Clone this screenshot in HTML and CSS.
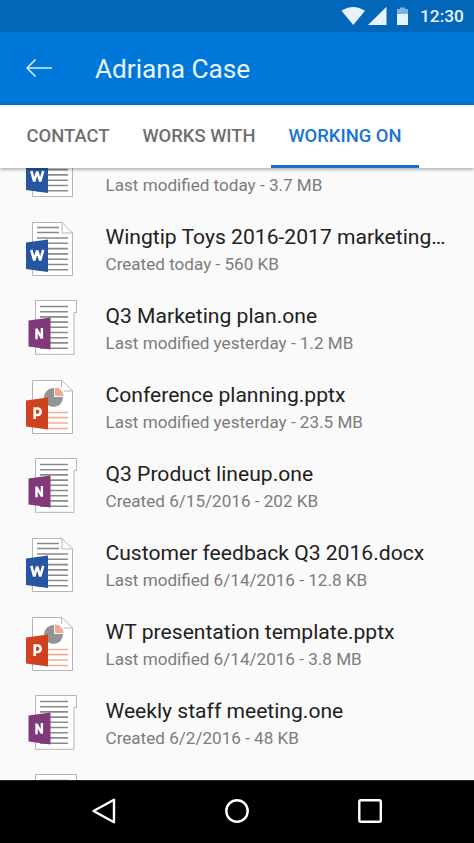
FILE: index.html
```html
<!DOCTYPE html>
<html lang="en">
<head>
<meta charset="utf-8">
<title>Adriana Case</title>
<link rel="stylesheet" href="styles.css">
</head>
<body>
<svg class="defs" width="0" height="0" aria-hidden="true">
  <symbol id="word" viewBox="0 0 54 56">
    <path d="M7.500 1.500H37L47.500 12V54.500H7.500Z" fill="#fff" stroke="#b5b5b5"/>
    <path d="M37 1.500V12H47.500" fill="none" stroke="#b5b5b5"/>
    <path d="M12 6.500H34M12 11.500H34M12 17H43M12 22.300H43M12 27.600H43M12 32.900H43M12 38.200H43M12 43.500H43M12 48.800H43" stroke="#8a8a8a" stroke-width="1.600"/>
    <path d="M1 21.500L23 18.500V51L1 48Z" fill="#2755a0"/>
    <path d="M6.300 28.800L9.200 39.500L12.200 29.500L15.200 39.500L18.200 28.800" fill="none" stroke="#fff" stroke-width="2.600" stroke-linejoin="bevel"/>
  </symbol>
  <symbol id="note" viewBox="0 0 54 56">
    <path d="M10.500 .500H51.500V12.500H49V54.300H10.500Z" fill="#fff" stroke="#b5b5b5"/>
    <path d="M15 6.500H43M15 11.700H43M15 16.900H43M15 22.100H43M15 27.300H43M15 32.500H43M15 37.700H43M15 42.900H43M15 48.200H43" stroke="#8a8a8a" stroke-width="1.600"/>
    <path d="M3.500 20.500L25.500 17.500V49.500L3.500 46.500Z" fill="#80397b"/>
    <path d="M11.500 39.200V28.500M16.900 38.800V28M11.500 29L16.900 38.500" fill="none" stroke="#fff" stroke-width="2.400"/>
  </symbol>
  <symbol id="deck" viewBox="0 0 54 56">
    <path d="M7.500 1.500H37L47.500 12V54.500H7.500Z" fill="#fff" stroke="#b5b5b5"/>
    <path d="M36.500 1.500V12H47.500" fill="none" stroke="#b5b5b5"/>
    <circle cx="28.500" cy="18.500" r="9.500" fill="#949494"/>
    <path d="M29 18V8H39V18Z" fill="#fff"/>
    <path d="M30 17V8.500A8.500 8.500 0 0 1 38.500 17Z" fill="#f5a88c"/>
    <path d="M22 33.500H43M22 38.700H43M22 44H43M22 49.500H43" stroke="#f2ad96" stroke-width="1.700"/>
    <path d="M1 21.500L23 18.500V50.500L1 47.500Z" fill="#d0421f"/>
    <path d="M9.700 40V29.500H12.500A3.200 3.200 0 0 1 12.500 36H9.700" fill="none" stroke="#fff" stroke-width="2.600"/>
  </symbol>
</svg>
<div class="screen">
  <div class="status">
    <svg class="signals" width="68" height="20" viewBox="0 0 68 20">
      <path d="M.500 4.800Q12 -3 24 4.800L12.300 19Z" fill="#e8f2fb"/>
      <path d="M45.500 .800V19H27Z" fill="#e8f2fb"/>
      <path d="M56 3H59V1.500H64V3H67V8H56Z" fill="#7fb2e0"/>
      <path d="M56 8H67V19H56Z" fill="#e8f2fb"/>
    </svg>
    <span class="clock">12:30</span>
  </div>
  <header class="appbar">
    <svg width="28" height="20" viewBox="0 0 28 20" fill="none" stroke="#d9ecfc" stroke-width="1.500"><path d="M27 10H2M10.500 1.500L2 10L10.500 18.500"/></svg>
    <h1>Adriana Case</h1>
  </header>
  <nav class="tabs">
    <a class="tab contact">CONTACT</a>
    <a class="tab works">WORKS WITH</a>
    <a class="tab active">WORKING ON</a>
  </nav>
  <main class="list">
    <div class="row"><svg class="icon"><use href="#word"/></svg><div class="info"><p class="name">Q3 report marketing.docx</p><p class="meta">Last modified today - 3.7 MB</p></div></div>
    <div class="row"><svg class="icon"><use href="#word"/></svg><div class="info"><p class="name">Wingtip Toys 2016-2017 marketing…</p><p class="meta">Created today - 560 KB</p></div></div>
    <div class="row"><svg class="icon"><use href="#note"/></svg><div class="info"><p class="name">Q3 Marketing plan.one</p><p class="meta">Last modified yesterday - 1.2 MB</p></div></div>
    <div class="row"><svg class="icon"><use href="#deck"/></svg><div class="info"><p class="name">Conference planning.pptx</p><p class="meta">Last modified yesterday - 23.5 MB</p></div></div>
    <div class="row"><svg class="icon"><use href="#note"/></svg><div class="info"><p class="name">Q3 Product lineup.one</p><p class="meta">Created 6/15/2016 - 202 KB</p></div></div>
    <div class="row"><svg class="icon"><use href="#word"/></svg><div class="info"><p class="name">Customer feedback Q3 2016.docx</p><p class="meta">Last modified 6/14/2016 - 12.8 KB</p></div></div>
    <div class="row"><svg class="icon"><use href="#deck"/></svg><div class="info"><p class="name">WT presentation template.pptx</p><p class="meta">Last modified 6/14/2016 - 3.8 MB</p></div></div>
    <div class="row"><svg class="icon"><use href="#note"/></svg><div class="info"><p class="name">Weekly staff meeting.one</p><p class="meta">Created 6/2/2016 - 48 KB</p></div></div>
    <div class="row"><svg class="icon"><use href="#note"/></svg></div>
  </main>
  <footer class="navbar">
    <svg width="26" height="28" viewBox="0 0 26 28"><path d="M2.500 14L23 2.800V25.200Z"/></svg>
    <svg width="26" height="28" viewBox="0 0 26 28"><circle cx="13" cy="14" r="10.700"/></svg>
    <svg width="26" height="28" viewBox="0 0 26 28"><rect x="2.300" y="3.300" width="21.500" height="21.500" rx="1.500"/></svg>
  </footer>
</div>
</body>
</html>
```
FILE: styles.css
```css
* { box-sizing: border-box; margin: 0; }
body { font-family: Roboto, "Liberation Sans", sans-serif; }
.defs { display: block; }
.screen { width: 474px; height: 843px; display: flex; flex-direction: column; overflow: hidden; background: #fafafa; }
.status { height: 32px; flex: none; display: flex; justify-content: flex-end; align-items: center; padding-right: 10px; background: #0266b9; color: #e8f2fb; }
.signals { margin-right: 11px; }
.clock { font-size: 17.3px; font-weight: 500; width: 44px; white-space: nowrap; }
.appbar { height: 73px; flex: none; display: flex; align-items: center; padding: 0 0 0 25px; background: #0078d9; color: #e9f4fe; }
.appbar svg { margin-top: -2px; }
.appbar h1 { margin-left: 42px; font-size: 26.2px; font-weight: 400; }
.tabs { height: 63px; flex: none; display: flex; padding-left: 9px; background: #fff; box-shadow: 0 1px 4px rgba(0,0,0,.4); z-index: 1; }
.tab { display: flex; align-items: center; justify-content: center; padding-bottom: 2px; font-size: 18.4px; font-weight: 500; color: #6f6f6f; white-space: nowrap; }
.contact { width: 118px; }
.works { width: 144px; }
.active { width: 148px; color: #1976d2; box-shadow: inset 0 -3px #1b6fd0; }
.list { flex: 1; min-height: 0; overflow: hidden; }
.row { height: 79px; display: flex; padding: 11px 0 0 25px; }
.row:first-child { margin-top: -37px; }
.icon { width: 54px; height: 56px; flex: none; }
.info { margin-left: 26.5px; }
.name { margin-top: 2px; font-size: 21.1px; line-height: 28px; color: #212121; white-space: nowrap; }
.row:first-child .name { margin: 0 0 2px; }
.meta { font-size: 17.1px; line-height: 26px; color: #7c7c7c; white-space: nowrap; }
.navbar { height: 63px; flex: none; display: flex; align-items: center; justify-content: space-between; padding: 0 91px 2px; background: #000; border-top: 1px solid #242424; }
.navbar svg { fill: none; stroke: #fff; stroke-width: 2.4; stroke-linejoin: round; }
```
